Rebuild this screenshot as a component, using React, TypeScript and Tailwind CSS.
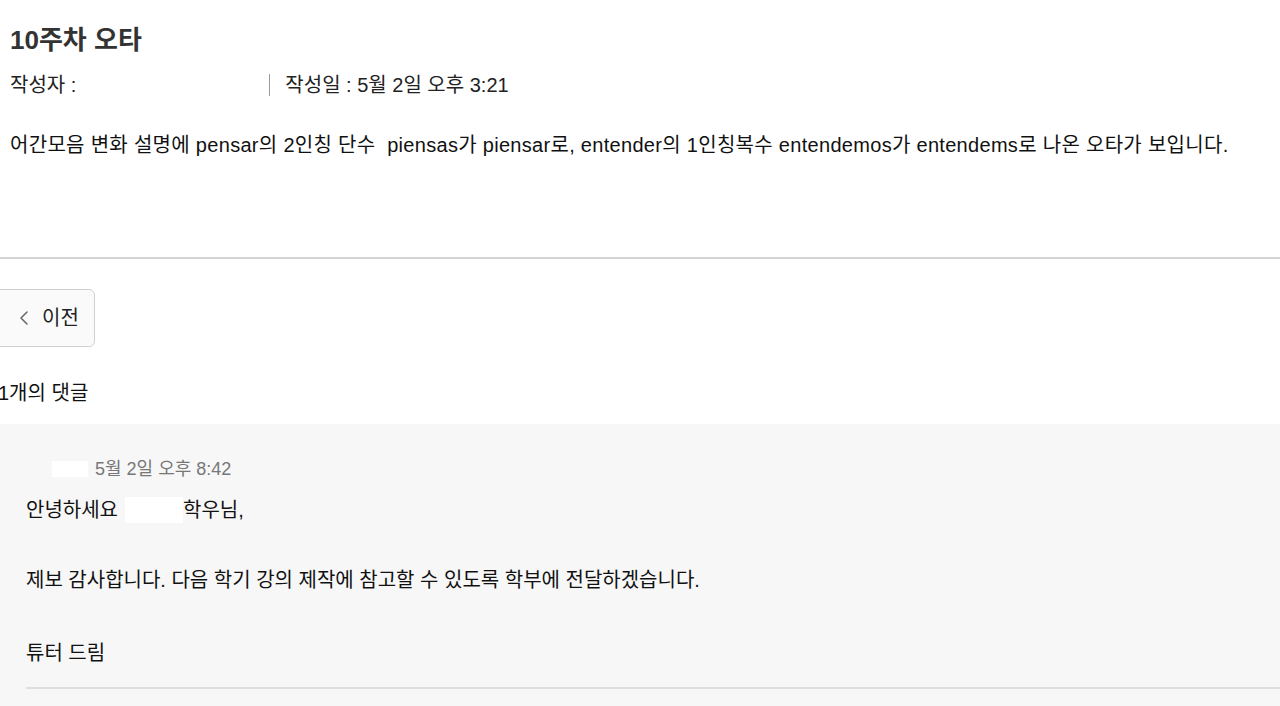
import React from 'react';
import { ChevronLeft } from 'lucide-react';

const font = { fontFamily: '"Liberation Sans", "Noto Sans CJK KR", sans-serif' };

const App: React.FC = () => {
  return (
    <div className="min-h-screen bg-white text-[#111] overflow-hidden" style={font}>
      {/* Post header */}
      <div className="px-[10px] pt-[24px]">
        <h1 className="text-[26px] leading-[32px] font-bold text-[#333]">10주차 오타</h1>
        <div className="mt-[15px] flex items-center text-[20px] leading-[28px] text-[#222]">
          <span>작성자 :</span>
          <span className="w-[193px]" />
          <span className="h-[22px] w-px bg-[#999]" />
          <span className="ml-[15px]">작성일 : 5월 2일 오후 3:21</span>
        </div>
        <p className="mt-[32px] text-[20px] leading-[28px] tracking-[0.3px] text-[#111] whitespace-pre">
          어간모음 변화 설명에 pensar의 2인칭 단수  piensas가 piensar로, entender의 1인칭복수 entendemos가 entendems로 나온 오타가 보입니다.
        </p>
      </div>

      <hr className="mt-[98px] border-0 h-[2px] bg-[#d4d4d4]" />

      {/* Prev button */}
      <div className="mt-[30px]">
        <button className="-ml-[6px] h-[58px] pl-[17px] pr-[15px] flex items-center gap-[6px] border border-[#d0d0d0] rounded-[6px] bg-[#fafafa] text-[20px] text-[#222]">
          <ChevronLeft size={24} strokeWidth={1.5} className="text-[#666]" />
          <span>이전</span>
        </button>
      </div>

      <div className="mt-[32px] -ml-[2px] text-[20px] leading-[28px] text-[#111]">1개의 댓글</div>

      {/* Comments */}
      <div className="mt-[17px] bg-[#f7f7f7] min-h-[300px] pl-[26px] pt-[34px]">
        <div className="flex items-center gap-[7px]">
          <span className="ml-[26px] w-[36px] h-[16px] bg-white" />
          <span className="text-[18px] leading-[22px] text-[#777]">5월 2일 오후 8:42</span>
        </div>
        <div className="mt-[16px] flex items-center text-[20px] leading-[28px] text-[#111]">
          <span>안녕하세요</span>
          <span className="ml-[7px] w-[58px] h-[26px] bg-white" />
          <span>학우님,</span>
        </div>
        <p className="mt-[42px] text-[20px] leading-[28px] text-[#111]">
          제보 감사합니다. 다음 학기 강의 제작에 참고할 수 있도록 학부에 전달하겠습니다.
        </p>
        <p className="mt-[45px] text-[20px] leading-[28px] text-[#111]">튜터 드림</p>
        <div className="mt-[20px] h-[2px] bg-[#dedede]" />
      </div>
    </div>
  );
};

export default App;
